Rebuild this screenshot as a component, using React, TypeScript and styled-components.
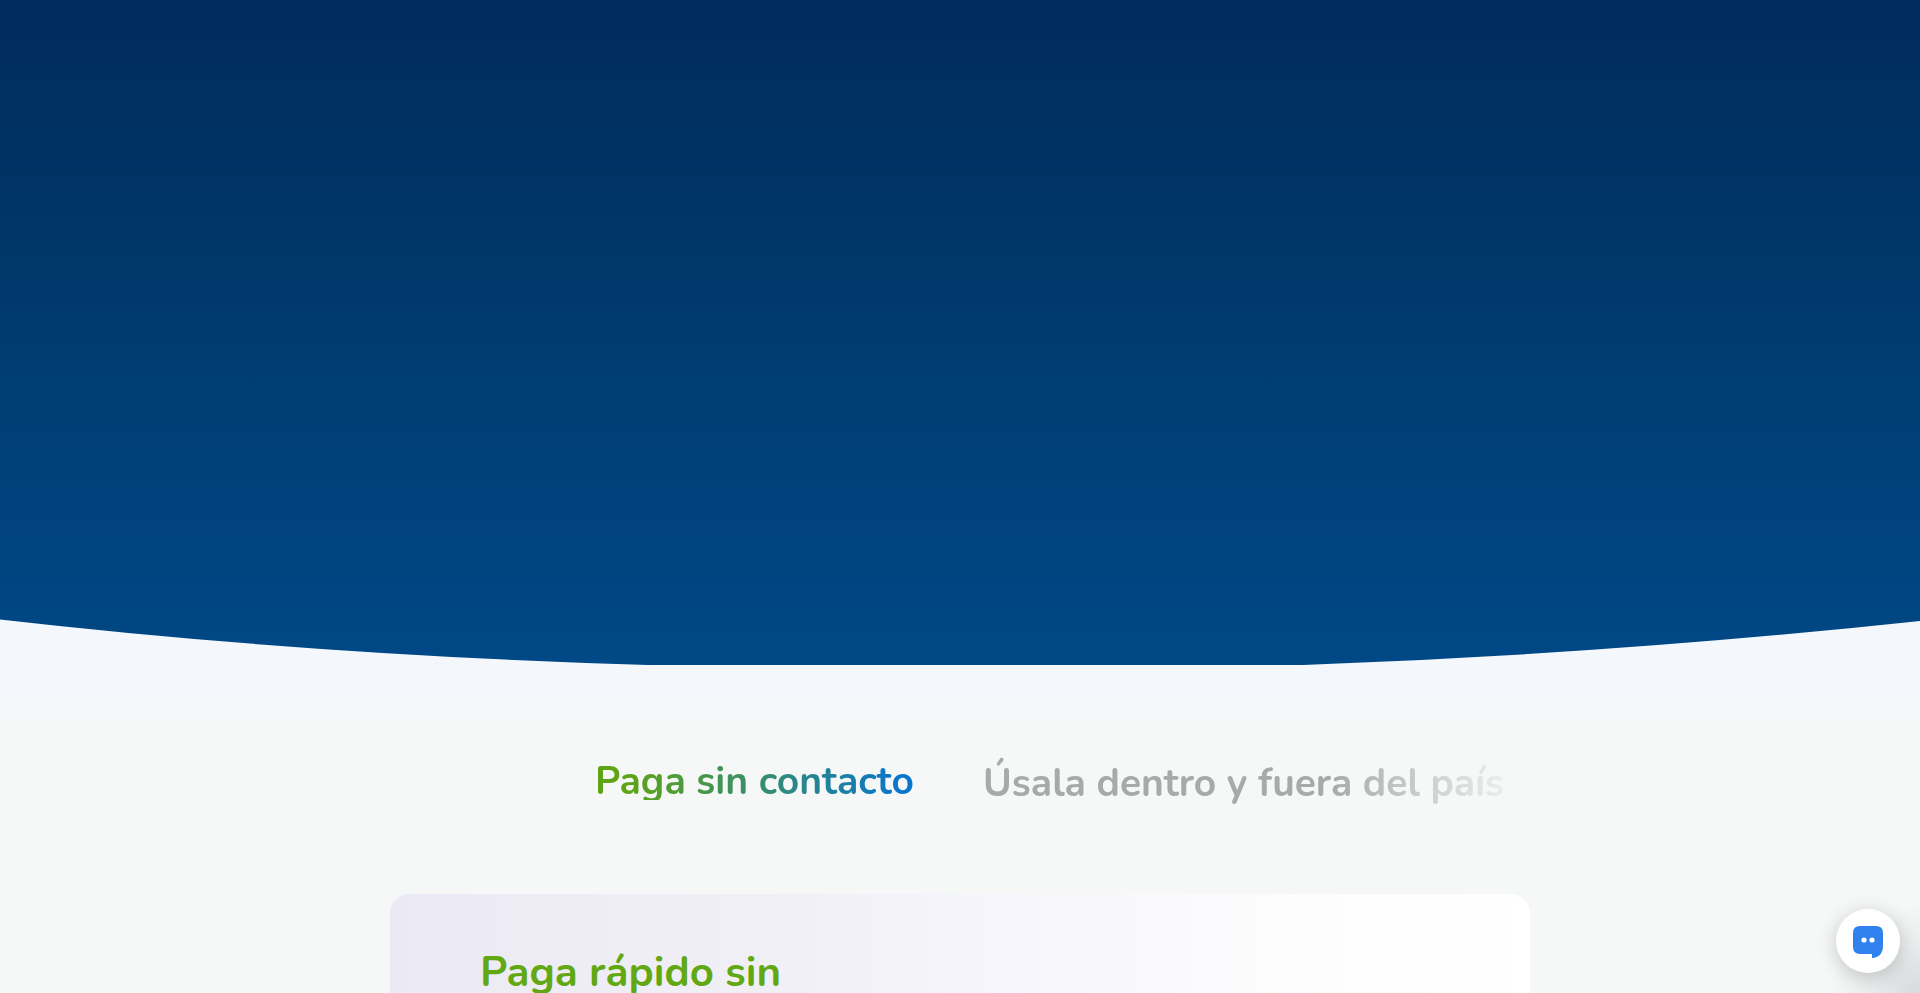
import React from "react";
import styled, { createGlobalStyle } from "styled-components";

const GlobalStyle = createGlobalStyle`
  * { box-sizing: border-box; }
  body {
    margin: 0;
    background: #f5f8f7;
    font-family: Nunito, Lato, "Open Sans", sans-serif;
  }
`;

const Page = styled.div`
  display: flex;
  flex-direction: column;
  height: 100vh;
  overflow: hidden;
`;

const Hero = styled.header`
  display: flex;
  flex: none;
  flex-direction: column;
  justify-content: flex-end;
  height: 67vh;
  background: linear-gradient(#002c5d 0%, #002e5f 10%, #003a6c 45%, #00427c 75%, #004886 100%);
`;

const HeroCurve = styled.svg`
  display: block;
  width: 100%;
  height: 50px;
`;

const Benefits = styled.main`
  display: flex;
  flex: none;
  flex-direction: column;
  align-items: center;
  background: linear-gradient(#f4f8fc 0, #f4f8fc 28px, #f5f8f7 60px);
`;

const Tabs = styled.div`
  display: flex;
  align-items: flex-start;
  gap: 69px;
  width: 100%;
  max-width: 1140px;
  margin-top: 89px;
  padding: 8px 0 0 205px;
  overflow: hidden;
  mask-image: linear-gradient(to right, #000 0, #000 940px, transparent 1140px);
`;

const Tab = styled.button<{ $active?: boolean }>`
  flex: none;
  padding: ${(p) => (p.$active ? "2px 0 0" : "0 0 8px")};
  border: 0;
  color: ${(p) => (p.$active ? "transparent" : "#a8a9a9")};
  background: ${(p) => (p.$active ? "linear-gradient(to right, #5ea416 0%, #5ea416 10%, #0b76cc 95%)" : "none")};
  background-clip: ${(p) => (p.$active ? "text" : "border-box")};
  font: inherit;
  font-size: 39px;
  font-weight: 700;
  line-height: ${(p) => (p.$active ? "36px" : "44px")};
  white-space: nowrap;
  cursor: pointer;
`;

const Card = styled.section`
  flex: none;
  width: 100%;
  max-width: 1140px;
  min-height: 400px;
  margin-top: 80px;
  padding: 54px 90px;
  border-radius: 20px;
  background: linear-gradient(to right, #ebe9f4 0%, #edecf5 10%, #f1f0f6 36%, #f4f3fb 46%, #f9f9fc 66%, #fdfdfe 80%, #ffffff 100%);
`;

const CardTitle = styled.h2`
  margin: 0;
  max-width: 330px;
  color: #62a812;
  font-size: 42px;
  font-weight: 700;
  line-height: 50px;
`;

const CornerGlow = styled.div`
  position: fixed;
  right: 0;
  bottom: 0;
  width: 100px;
  height: 100px;
  background: radial-gradient(circle 90px at 100% 100%, rgba(29, 39, 54, 0.14) 0%, rgba(29, 39, 54, 0.05) 55%, rgba(29, 39, 54, 0) 100%);
  pointer-events: none;
`;

const ChatButton = styled.button`
  position: fixed;
  right: 20px;
  bottom: 20px;
  display: flex;
  align-items: center;
  justify-content: center;
  width: 64px;
  height: 64px;
  padding: 0;
  border: 0;
  border-radius: 50%;
  background: #ffffff;
  box-shadow: 0 4px 20px rgba(0, 0, 0, 0.2);
  cursor: pointer;
`;

export default function App() {
  return (
    <Page>
      <GlobalStyle />
      <Hero>
        <HeroCurve viewBox="0 0 1920 50" preserveAspectRatio="none" aria-hidden="true">
          <path d="M0 4.5 Q310 40 648 50 H0 Z" fill="#f4f8fc" />
          <path d="M1920 6 Q1612 39 1303 50 H1920 Z" fill="#f4f8fc" />
        </HeroCurve>
      </Hero>
      <Benefits>
        <Tabs role="tablist">
          <Tab role="tab" aria-selected="true" $active>Paga sin contacto</Tab>
          <Tab role="tab" aria-selected="false">Úsala dentro y fuera del país</Tab>
        </Tabs>
        <Card role="tabpanel">
          <CardTitle>Paga rápido sin</CardTitle>
        </Card>
      </Benefits>
      <CornerGlow />
      <ChatButton aria-label="Abrir chat">
        <svg width="34" height="36" viewBox="0 -2 34 36" aria-hidden="true">
          <path d="M9 1 H25 Q32 1 32 8 V21 C32 28 28 33 21 33 V29 H9 Q2 29 2 22 V8 Q2 1 9 1 Z" fill="#3080ee" />
          <circle cx="13" cy="15" r="2.600" fill="#fff" />
          <circle cx="21" cy="15" r="2.600" fill="#fff" />
        </svg>
      </ChatButton>
    </Page>
  );
}
